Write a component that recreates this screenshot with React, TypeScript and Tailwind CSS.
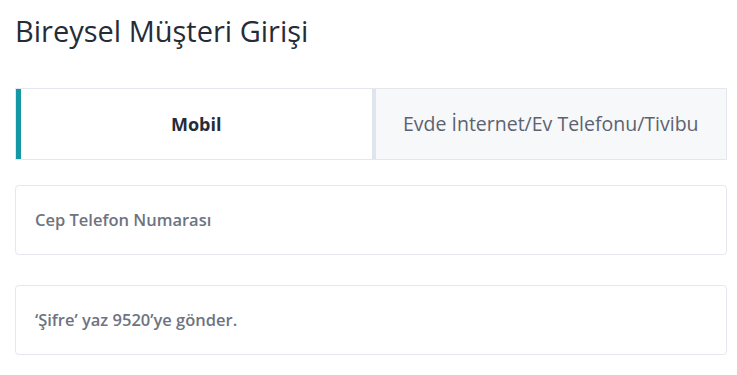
import React, { useState } from 'react';

const App: React.FC = () => {
  const [tab, setTab] = useState<'mobil' | 'ev'>('mobil');
  return (
    <div className="w-[737px] h-[375px] bg-white px-[15px] pt-[12px] font-['Open_Sans',_'Noto_Sans',_sans-serif]">
      <h1 className="text-[29px] leading-[38px] font-normal text-[#262b38]">Bireysel Müşteri Girişi</h1>
      <div className="mt-[38px] flex h-[72px] w-[712px] border border-[#e4e8ee]">
        <button
          onClick={() => setTab('mobil')}
          className={`flex-1 flex items-center justify-center border-l-[5px] ${
            tab === 'mobil'
              ? 'border-[#1598a5] bg-white font-bold text-[18px] text-[#262b38]'
              : 'border-[#dfe5ee] bg-[#f7f8fa] text-[19.5px] text-[#5c6270]'
          }`}
        >
          Mobil
        </button>
        <button
          onClick={() => setTab('ev')}
          className={`flex-1 flex items-center justify-center border-l-[4px] ${
            tab === 'ev'
              ? 'border-[#1598a5] bg-white font-bold text-[18px] text-[#262b38]'
              : 'border-[#dfe5ee] bg-[#f7f8fa] text-[19.5px] text-[#5c6270]'
          }`}
        >
          Evde İnternet/Ev Telefonu/Tivibu
        </button>
      </div>
      <div className="mt-[25px] flex flex-col gap-[30px] w-[712px]">
        <div className="h-[70px] flex items-center rounded-[4px] border border-[#e4e8ee] px-[19px] text-[16.5px] font-semibold text-[#6e7380]">
          Cep Telefon Numarası
        </div>
        <div className="h-[70px] flex items-center rounded-[4px] border border-[#e4e8ee] px-[19px] text-[16.5px] font-semibold text-[#6e7380]">
          ‘Şifre’ yaz 9520’ye gönder.
        </div>
      </div>
    </div>
  );
};

export default App;
